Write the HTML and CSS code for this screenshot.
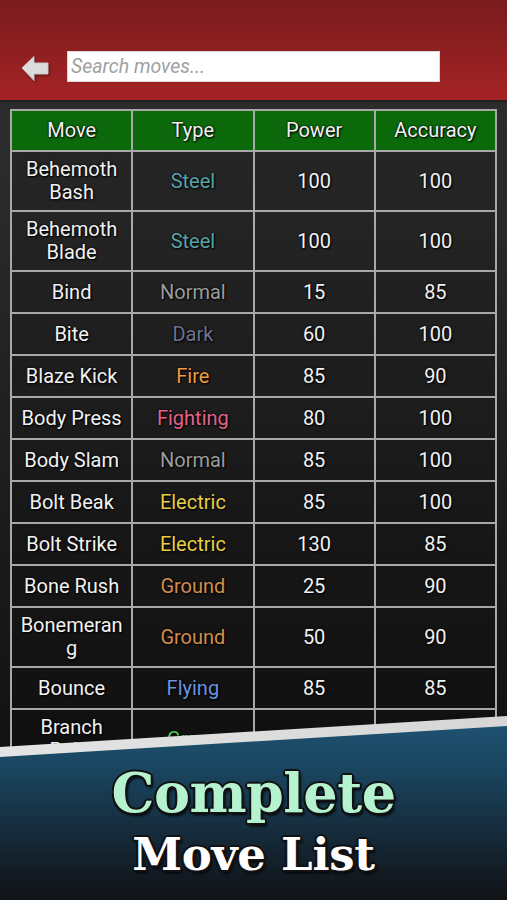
FILE: index.html
```html
<!DOCTYPE html>
<html>
<head>
<meta charset="utf-8">
<link rel="stylesheet" href="styles.css">
</head>
<body>
<div class="screen">
  <header class="topbar">
    <svg class="back" width="28" height="27" viewBox="0 0 28 27">
      <polygon points="1,13 13,1.5 13,8 27,8 27,19 13,19 13,25.5" fill="#dcdcdc" stroke="#c8c8c8" stroke-width="1" stroke-linejoin="round"/>
    </svg>
    <div class="search">Search moves...</div>
  </header>
  <main class="content">
    <table class="moves">
      <thead>
        <tr><th>Move</th><th>Type</th><th>Power</th><th>Accuracy</th></tr>
      </thead>
      <tbody>
        <tr class="tall"><td>Behemoth Bash</td><td class="steel">Steel</td><td>100</td><td>100</td></tr>
        <tr class="tall"><td>Behemoth Blade</td><td class="steel">Steel</td><td>100</td><td>100</td></tr>
        <tr><td>Bind</td><td class="normal">Normal</td><td>15</td><td>85</td></tr>
        <tr><td>Bite</td><td class="dark">Dark</td><td>60</td><td>100</td></tr>
        <tr><td>Blaze Kick</td><td class="fire">Fire</td><td>85</td><td>90</td></tr>
        <tr><td>Body Press</td><td class="fighting">Fighting</td><td>80</td><td>100</td></tr>
        <tr><td>Body Slam</td><td class="normal">Normal</td><td>85</td><td>100</td></tr>
        <tr><td>Bolt Beak</td><td class="electric">Electric</td><td>85</td><td>100</td></tr>
        <tr><td>Bolt Strike</td><td class="electric">Electric</td><td>130</td><td>85</td></tr>
        <tr><td>Bone Rush</td><td class="ground">Ground</td><td>25</td><td>90</td></tr>
        <tr class="tall"><td>Bonemerang</td><td class="ground">Ground</td><td>50</td><td>90</td></tr>
        <tr><td>Bounce</td><td class="flying">Flying</td><td>85</td><td>85</td></tr>
        <tr class="tall"><td>Branch Poke</td><td class="grass">Grass</td><td>40</td><td>100</td></tr>
      </tbody>
    </table>
  </main>
  <div class="banner">
    <div class="stripe"></div>
    <div class="panel">
      <div class="title">Complete</div>
      <div class="subtitle">Move List</div>
    </div>
  </div>
</div>
</body>
</html>
```
FILE: styles.css
```css
html, body {
  margin: 0;
  padding: 0;
  background: #111;
}
.screen {
  position: relative;
  width: 507px;
  height: 900px;
  overflow: hidden;
  background: linear-gradient(to bottom, #2f2f2f 0px, #2a2a2a 200px, #1a1a1a 550px, #121212 760px);
  font-family: Roboto, "Noto Sans", sans-serif;
}
.topbar {
  height: 100px;
  box-sizing: border-box;
  background: linear-gradient(to bottom, #7a1b1d 0%, #8f1f21 50%, #a62325 100%);
  display: flex;
  align-items: flex-start;
  padding: 51px 0 0 21px;
  box-shadow: 0 1px 3px rgba(0,0,0,0.5);
}
.back {
  margin-top: 4px;
  filter: drop-shadow(1px 1px 1px rgba(0,0,0,0.45));
}
.search {
  margin-left: 18px;
  width: 373px;
  height: 31px;
  box-sizing: border-box;
  background: #fff;
  border: 1px solid #d9d9d9;
  color: #a0a0a0;
  font-style: italic;
  font-size: 19.5px;
  line-height: 29px;
  padding-left: 3px;
}
.content {
  padding: 9px 10px 0 10px;
}
.moves {
  width: 487px;
  border-collapse: collapse;
  table-layout: fixed;
  border: 2px solid #a8a8a8;
}
.moves th, .moves td {
  border: 2px solid #a8a8a8;
  text-align: center;
  color: #f2f2f2;
  font-size: 20px;
  line-height: 23px;
  text-shadow: 1px 1px 2px #000, 0 0 2px #000;
  padding: 0 8px;
  overflow-wrap: anywhere;
}
.moves th {
  background: #0b680b;
  font-weight: normal;
  height: 39px;
}
.moves td {
  height: 40px;
  background: rgba(0,0,0,0.12);
}
.moves tr.tall td {
  height: 58px;
  padding-top: 0;
  padding-bottom: 0;
}
.moves td.steel { color: #5aa3ab; }
.moves td.normal { color: #9c9c9c; }
.moves td.dark { color: #6b7590; }
.moves td.fire { color: #f19a3e; }
.moves td.fighting { color: #e4638a; }
.moves td.electric { color: #e9cf45; }
.moves td.ground { color: #d38d4d; }
.moves td.flying { color: #6b93e2; }
.moves td.grass { color: #54c457; }

.banner {
  position: absolute;
  left: 0;
  top: 716px;
  width: 507px;
  height: 184px;
}
.stripe {
  position: absolute;
  inset: 0;
  background: linear-gradient(to right, #e4e4e4, #d6d6d6);
  clip-path: polygon(0 31px, 100% 0, 100% 100%, 0 100%);
}
.panel {
  position: absolute;
  inset: 0;
  background: linear-gradient(to bottom, #1f5374 0px, #1a4661 50px, #162e3f 110px, #121a22 160px, #111417 184px);
  clip-path: polygon(0 41px, 100% 10px, 100% 100%, 0 100%);
  display: flex;
  flex-direction: column;
  align-items: center;
  padding-top: 45px;
  box-sizing: border-box;
  font-family: "DejaVu Serif", "Liberation Serif", serif;
  font-weight: bold;
}
.title {
  color: #b5f2cf;
  font-size: 54px;
  line-height: 64px;
  letter-spacing: -0.5px;
  text-shadow: 2px 0 0 #111, -2px 0 0 #111, 0 2px 0 #111, 0 -2px 0 #111, 1.5px 1.5px 0 #111, -1.5px -1.5px 0 #111, 1.5px -1.5px 0 #111, -1.5px 1.5px 0 #111, 2px 3px 3px #000;
}
.subtitle {
  margin-top: 3px;
  color: #ffffff;
  font-size: 45px;
  line-height: 54px;
  letter-spacing: -0.3px;
  text-shadow: 2px 0 0 #111, -2px 0 0 #111, 0 2px 0 #111, 0 -2px 0 #111, 1.5px 1.5px 0 #111, -1.5px -1.5px 0 #111, 1.5px -1.5px 0 #111, -1.5px 1.5px 0 #111, 2px 3px 3px #000;
}
```
